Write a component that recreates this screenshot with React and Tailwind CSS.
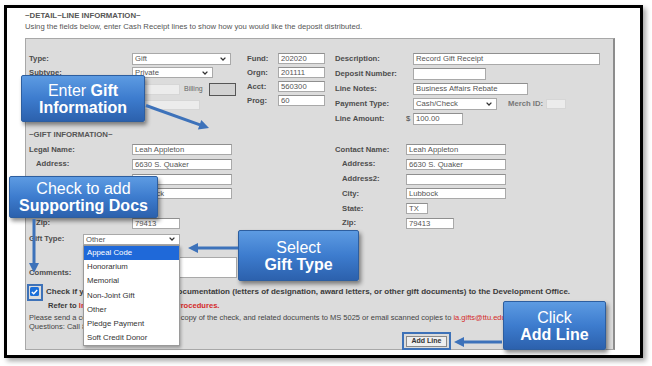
const lbl = "text-[7.7px] font-bold text-[#4d4d4d] leading-[10px] whitespace-nowrap";

const Input = ({ className = "", value = "" }) => (
  <div
    className={
      "h-[11px] bg-white border border-[#a9a9a9] border-t-[#8f8f8f] text-[7.7px] leading-[9px] text-[#555] pl-[2px] overflow-hidden whitespace-nowrap " +
      className
    }
  >
    {value}
  </div>
);

const Faded = ({ className = "" }) => (
  <div className={"bg-[#ececec] border border-[#d6d6d6] " + className}></div>
);

const Select = ({ className = "", value = "" }) => (
  <div
    className={
      "bg-white border border-[#a9a9a9] flex items-center justify-between pl-[2px] pr-[4px] text-[7.7px] text-[#555] whitespace-nowrap " +
      className
    }
  >
    <span>{value}</span>
    <svg width="6" height="4" viewBox="0 0 6 4">
      <path d="M0.6 0.6 L3 3 L5.4 0.6" stroke="#333" strokeWidth="1.3" fill="none" />
    </svg>
  </div>
);

const Callout = ({ className = "", children }) => (
  <div
    className={
      "absolute flex flex-col items-center justify-center text-white text-[16px] leading-[17px] rounded-[2px] border border-[#2d5e9f] bg-linear-to-b from-[#5d9be2] via-[#3d7cce] to-[#2c61ad] shadow-[2px_3px_4px_rgba(0,0,0,0.45)] " +
      className
    }
  >
    {children}
  </div>
);

const gifts = [
  "Appeal Code",
  "Honorarium",
  "Memorial",
  "Non-Joint Gift",
  "Other",
  "Pledge Payment",
  "Soft Credit Donor",
];

export default function App() {
  return (
    <div className="relative w-[652px] h-[366px] bg-white overflow-hidden font-['Liberation_Sans',Arial,sans-serif]">
      {/* frame */}
      <div className="ml-[4px] mt-[5px] w-[639px] h-[353px] border-[3px] border-black shadow-[3px_3px_5px_rgba(0,0,0,0.35)] pl-[18px] pt-[3px]">
        <div className="text-[7.8px] font-bold text-[#555] leading-[10px]">~DETAIL~LINE INFORMATION~</div>
        <div className="mt-[1px] text-[7.7px] text-[#555] leading-[10px] whitespace-nowrap">
          Using the fields below, enter Cash Receipt lines to show how you would like the deposit distributed.
        </div>

        {/* panel */}
        <div className="mt-[6px] w-[590px] h-[312px] bg-[#dcdcdc] border border-[#a8a8a8] border-r-2 border-r-[#8c8c8c] pl-[3px] pt-[14px]">
          <div className="flex">
            {/* col A */}
            <div className="w-[207px] flex flex-col">
              <div className="flex items-center h-[12px]">
                <div className={lbl + " w-[103px]"}>Type:</div>
                <Select className="w-[99px] h-[12px]" value="Gift" />
              </div>
              <div className="flex items-center h-[11px] mt-[2px]">
                <div className={lbl + " w-[103px]"}>Subtype:</div>
                <Select className="w-[81px] h-[11px]" value="Private" />
              </div>
              <div className="flex items-center h-[13px] mt-[5px]">
                <div className={lbl + " w-[103px]"}>Donor ID:</div>
                <Faded className="w-[48px] h-[11px]" />
                <div className="ml-[4px] w-[25px] text-[7px] text-[#666]">Billing</div>
                <div className="w-[27px] h-[13px] bg-[#d2d2d2] border border-[#555]"></div>
              </div>
              <div className="flex items-center h-[10px] mt-[4px]">
                <div className={lbl + " w-[103px]"}>Name:</div>
                <Faded className="w-[68px] h-[10px]" />
              </div>
            </div>

            {/* col B */}
            <div className="ml-[11px] flex flex-col gap-[3px]">
              {[
                ["Fund:", "202020"],
                ["Orgn:", "201111"],
                ["Acct:", "560300"],
                ["Prog:", "60"],
              ].map(([l, v]) => (
                <div key={l} className="flex items-center h-[11px]">
                  <div className={lbl + " w-[31px]"}>{l}</div>
                  <Input className="w-[47px]" value={v} />
                </div>
              ))}
            </div>

            {/* col C */}
            <div className="ml-[10px] flex flex-col gap-[3px]">
              <div className="flex items-center h-[12px]">
                <div className={lbl + " w-[78px]"}>Description:</div>
                <Input className="w-[187px] h-[12px]" value="Record Gift Receipt" />
              </div>
              <div className="flex items-center h-[12px]">
                <div className={lbl + " w-[78px]"}>Deposit Number:</div>
                <Input className="w-[73px] h-[12px]" />
              </div>
              <div className="flex items-center h-[12px]">
                <div className={lbl + " w-[78px]"}>Line Notes:</div>
                <Input className="w-[115px] h-[12px]" value="Business Affairs Rebate" />
              </div>
              <div className="flex items-center h-[12px]">
                <div className={lbl + " w-[78px]"}>Payment Type:</div>
                <Select className="w-[84px] h-[12px]" value="Cash/Check" />
                <div className={lbl + " ml-[11px] w-[38px] text-[#777]"}>Merch ID:</div>
                <Faded className="w-[20px] h-[10px]" />
              </div>
              <div className="flex items-center h-[12px]">
                <div className={lbl + " w-[71px]"}>Line Amount:</div>
                <div className="w-[7px] text-[7.7px] text-[#444]">$</div>
                <Input className="w-[50px] h-[12px]" value="100.00" />
              </div>
            </div>
          </div>

          {/* gift information */}
          <div className="mt-[5px] h-[10px] text-[7.8px] font-bold text-[#555] leading-[10px]">~GIFT INFORMATION~</div>
          <div className="mt-[4px] flex">
            <div className="w-[203px] flex flex-col gap-[3.8px]">
              {[
                ["Legal Name:", "Leah Appleton", "w-[100px]", ""],
                ["Address:", "6630 S. Quaker", "w-[100px]", "pl-[7px]"],
                ["Address2:", "", "w-[100px]", "pl-[7px]"],
                ["City:", "Lubbock", "w-[100px]", "pl-[7px]"],
                ["State:", "TX", "w-[22px]", "pl-[7px]"],
                ["Zip:", "79413", "w-[48px]", "pl-[7px]"],
              ].map(([l, v, w, p]) => (
                <div key={l} className="flex items-center h-[11px]">
                  <div className={lbl + " w-[103px] " + p}>{l}</div>
                  <Input className={w} value={v} />
                </div>
              ))}
            </div>
            <div className="ml-[103px] flex flex-col gap-[3.8px]">
              {[
                ["Contact Name:", "Leah Appleton", "w-[100px]", ""],
                ["Address:", "6630 S. Quaker", "w-[100px]", "pl-[7px]"],
                ["Address2:", "", "w-[100px]", "pl-[7px]"],
                ["City:", "Lubbock", "w-[100px]", "pl-[7px]"],
                ["State:", "TX", "w-[22px]", "pl-[7px]"],
                ["Zip:", "79413", "w-[48px]", "pl-[7px]"],
              ].map(([l, v, w, p]) => (
                <div key={l} className="flex items-center h-[11px]">
                  <div className={lbl + " w-[71px] " + p}>{l}</div>
                  <Input className={w} value={v} />
                </div>
              ))}
            </div>
          </div>

          <div className="mt-[5px] flex items-center h-[11px]">
            <div className={lbl + " w-[54px]"}>Gift Type:</div>
            <Select className="w-[97px] h-[11px]" value="Other" />
          </div>
          <div className="mt-[12px] flex items-end h-[21px]">
            <div className={lbl + " w-[54px]"}>Comments:</div>
            <div className="w-[154px] h-[21px] bg-white border border-[#a9a9a9]"></div>
          </div>

          <div className="mt-[8px] flex items-center h-[12px]">
            <div className="ml-[1px] w-[9px] h-[9px] rounded-[1.5px] bg-[#1b6fd9] flex items-center justify-center">
              <svg width="7" height="6" viewBox="0 0 7 6">
                <path d="M0.8 3 L2.7 4.8 L6.2 1" stroke="white" strokeWidth="1.4" fill="none" />
              </svg>
            </div>
            <div className="ml-[7px] text-[8px] font-bold text-[#3a3a3a] whitespace-nowrap">
              Check if you do send supporting documentation (letters of designation, award letters, or other gift documents) to the Development Office.
            </div>
          </div>
          <div className="mt-[3px] h-[10px] leading-[10px] pl-[19px] text-[7.6px] font-bold text-[#3a3a3a] whitespace-nowrap">
            Refer to <span className="text-[#d42a2a]">Institutional Advancement Procedures.</span>
          </div>
          <div className="mt-[2px] leading-[9px] text-[7.5px] text-[#444] whitespace-nowrap">
            Please send a completed copy of this form, a copy of the check, and related documents to MS 5025 or email scanned copies to{" "}
            <span className="text-[#d42a2a]">ia.gifts@ttu.edu</span>
          </div>
          <div className="leading-[9px] text-[7.5px] text-[#444] whitespace-nowrap">Questions: Call 806.742.1781</div>
          <div className="mt-[5px] ml-[377px] w-[41px] h-[11px] bg-[#efefef] border border-[#8a8a8a] flex items-center justify-center text-[7px] font-bold text-[#333]">
            Add Line
          </div>
        </div>
      </div>

      {/* dropdown list */}
      <div className="absolute left-[83px] top-[245px] w-[97px] h-[101px] bg-white border border-[#9a9a9a] shadow-[1px_2px_3px_rgba(0,0,0,0.3)] flex flex-col">
        {gifts.map((g, i) => (
          <div
            key={g}
            className={
              "h-[14.2px] leading-[14.2px] pl-[3px] text-[7.8px] whitespace-nowrap " +
              (i === 0 ? "bg-[#1f69d9] text-white" : "text-[#333]")
            }
          >
            {g}
          </div>
        ))}
      </div>

      {/* highlights */}
      <div className="absolute left-[27px] top-[284px] w-[16px] h-[17px] border-2 border-[#3e72b8]"></div>
      <div className="absolute left-[402px] top-[332px] w-[49px] h-[18px] border-2 border-[#3e72b8]"></div>

      {/* callouts */}
      <Callout className="left-[21px] top-[75px] w-[124px] h-[47px]">
        <div>
          Enter <b>Gift</b>
        </div>
        <div className="font-bold">Information</div>
      </Callout>
      <Callout className="left-[9px] top-[176px] w-[149px] h-[42px]">
        <div>Check to add</div>
        <div className="font-bold">Supporting Docs</div>
      </Callout>
      <Callout className="left-[238px] top-[230px] w-[121px] h-[51px]">
        <div>Select</div>
        <div className="font-bold">Gift Type</div>
      </Callout>
      <Callout className="left-[503px] top-[301px] w-[103px] h-[49px]">
        <div>Click</div>
        <div className="font-bold">Add Line</div>
      </Callout>

      {/* arrows */}
      <svg className="absolute left-0 top-0 pointer-events-none" width="652" height="366" viewBox="0 0 652 366">
        <g stroke="#3d72ba" strokeWidth="3" fill="none">
          <line x1="146" y1="105.5" x2="200" y2="124.9" />
          <line x1="34" y1="219" x2="34" y2="264" />
          <line x1="238" y1="248" x2="197" y2="248" />
          <line x1="502" y1="342" x2="463" y2="342" />
        </g>
        <g fill="#3d72ba">
          <polygon points="209,128 197.9,129.4 201.3,119.9" />
          <polygon points="34,273 29,263 39,263" />
          <polygon points="188,248 198,243 198,253" />
          <polygon points="454,342 464,337 464,347" />
        </g>
      </svg>
    </div>
  );
}
